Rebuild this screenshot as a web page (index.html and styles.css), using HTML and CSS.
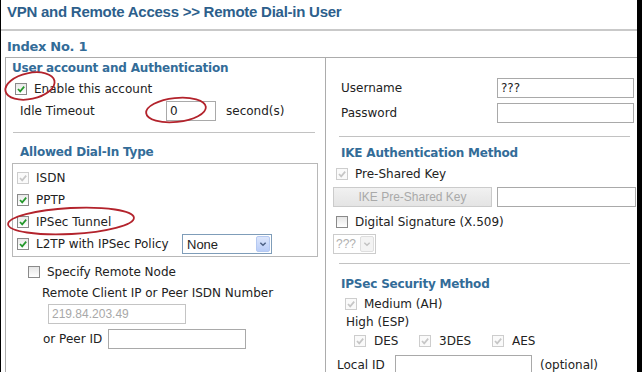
FILE: index.html
```html
<!DOCTYPE html>
<html lang="en">
<head>
    <meta charset="UTF-8">
    <title>Remote Dial-in User</title>
    <link rel="stylesheet" href="styles.css">
</head>
<body>
<div class="page">
    <h1 class="title">VPN and Remote Access &gt;&gt; Remote Dial-in User</h1>
    <div class="index">Index No. 1</div>

    <div class="panels">
        <!-- left side -->
        <div class="panel left">
            <div class="sec-title first">User account and Authentication</div>
            <div class="row enable">
                <span class="cb"><svg viewBox="0 0 10 10"><polyline points="2,5 4.2,7.4 8.2,2.6"/></svg></span>
                Enable this account
            </div>
            <div class="row idle">
                <span class="idle-label">Idle Timeout</span>
                <input type="text" class="field timeout" value="0">
                <span class="unit">second(s)</span>
            </div>
            <div class="sep"></div>
            <div class="sec-title dial">Allowed Dial-In Type</div>
            <div class="dial-box">
                <div class="row"><span class="cb off"><svg viewBox="0 0 10 10"><polyline points="2,5 4.2,7.4 8.2,2.6"/></svg></span>ISDN</div>
                <div class="row"><span class="cb"><svg viewBox="0 0 10 10"><polyline points="2,5 4.2,7.4 8.2,2.6"/></svg></span>PPTP</div>
                <div class="row"><span class="cb"><svg viewBox="0 0 10 10"><polyline points="2,5 4.2,7.4 8.2,2.6"/></svg></span>IPSec Tunnel</div>
                <div class="row">
                    <span class="cb"><svg viewBox="0 0 10 10"><polyline points="2,5 4.2,7.4 8.2,2.6"/></svg></span>
                    <span class="l2tp-label">L2TP with IPSec Policy</span>
                    <span class="select policy">
                        <span class="select-text">None</span>
                        <span class="arrow"><svg viewBox="0 0 9 6"><polyline points="1.5,1.5 4.5,4.5 7.5,1.5"/></svg></span>
                    </span>
                </div>
            </div>
            <div class="row specify"><span class="cb blank"></span>Specify Remote Node</div>
            <div class="row remote-label">Remote Client IP or Peer ISDN Number</div>
            <div class="row remote-ip"><input type="text" class="field wide disabled" value="219.84.203.49"></div>
            <div class="row peer">
                <span class="peer-label">or Peer ID</span>
                <input type="text" class="field wide" value="">
            </div>
        </div>

        <!-- right side -->
        <div class="panel right">
            <div class="row user">
                <span class="pair-label">Username</span>
                <input type="text" class="field cred" value="???">
            </div>
            <div class="row pass">
                <span class="pair-label">Password</span>
                <input type="text" class="field cred" value="">
            </div>
            <div class="sep right-sep"></div>
            <div class="sec-title ike">IKE Authentication Method</div>
            <div class="row chk-row"><span class="cb off"><svg viewBox="0 0 10 10"><polyline points="2,5 4.2,7.4 8.2,2.6"/></svg></span>Pre-Shared Key</div>
            <div class="row key-row">
                <span class="key-btn">IKE Pre-Shared Key</span>
                <input type="text" class="field key" value="">
            </div>
            <div class="row chk-row digital"><span class="cb blank"></span>Digital Signature (X.509)</div>
            <div class="row cert-row">
                <span class="select cert">
                    <span class="select-text">???</span>
                    <span class="arrow"><svg viewBox="0 0 9 6"><polyline points="1.5,1.5 4.5,4.5 7.5,1.5"/></svg></span>
                </span>
            </div>
            <div class="sep right-sep second"></div>
            <div class="sec-title ipsec">IPSec Security Method</div>
            <div class="row medium"><span class="cb off"><svg viewBox="0 0 10 10"><polyline points="2,5 4.2,7.4 8.2,2.6"/></svg></span>Medium (AH)</div>
            <div class="row high">High (ESP)</div>
            <div class="row algos">
                <span class="algo des"><span class="cb off"><svg viewBox="0 0 10 10"><polyline points="2,5 4.2,7.4 8.2,2.6"/></svg></span>DES</span>
                <span class="algo tdes"><span class="cb off"><svg viewBox="0 0 10 10"><polyline points="2,5 4.2,7.4 8.2,2.6"/></svg></span>3DES</span>
                <span class="algo"><span class="cb off"><svg viewBox="0 0 10 10"><polyline points="2,5 4.2,7.4 8.2,2.6"/></svg></span>AES</span>
            </div>
            <div class="row local">
                <span class="local-label">Local ID</span>
                <input type="text" class="field cred" value="">
                <span class="unit">(optional)</span>
            </div>
        </div>
    </div>
</div>

<!-- red marks drawn over the screenshot -->
<svg class="marks" viewBox="0 0 642 372">
    <ellipse cx="30" cy="86" rx="25" ry="13" transform="rotate(-12 30 86)"/>
    <ellipse cx="176" cy="110" rx="30" ry="12" transform="rotate(-6 176 110)"/>
    <ellipse cx="71" cy="221" rx="63" ry="13" transform="rotate(-3 71 221)"/>
</svg>
</body>
</html>
```

FILE: styles.css
```css
body {
    margin: 0;
    background-color: #000;
    font-family: 'DejaVu Sans', Verdana, sans-serif;
    font-size: 12px;
    color: #222;
    position: relative;
    width: 642px;
    height: 372px;
    overflow: hidden;
}

.page {
    margin: 0 5px 0 1px;
    background-color: #fff;
    height: 372px;
    overflow: hidden;
}

.title {
    margin: 0;
    padding: 2px 0 7px 6px;
    font-family: 'Liberation Sans', Arial, sans-serif;
    font-size: 15px;
    letter-spacing: -0.25px;
    line-height: 20px;
    color: #2d5f8c;
    border-bottom: 2px solid #c9c9c9;
}

.index {
    padding: 6px 0 0 6px;
    height: 20px;
    line-height: 20px;
    font-weight: bold;
    font-size: 13px;
    letter-spacing: -0.3px;
    color: #336c98;
}

.panels {
    display: grid;
    grid-template-columns: 321px 1fr;
    margin-left: 4px;
    border-top: 1px solid #acacac;
}

.panel.left {
    border-left: 1px solid #acacac;
    border-right: 1px solid #acacac;
    height: 320px;
}

.sec-title {
    font-weight: bold;
    letter-spacing: -0.2px;
    color: #336c98;
    line-height: 20px;
}

.sec-title.first {
    padding-left: 6px;
}

.sec-title.dial {
    padding: 9px 0 1px 14px;
}

.row {
    display: flex;
    align-items: center;
    height: 22px;
    white-space: nowrap;
}

.cb {
    display: inline-flex;
    align-items: center;
    justify-content: center;
    width: 12px;
    height: 12px;
    box-sizing: border-box;
    border: 1px solid #8a8a8a;
    background: linear-gradient(#e9e9e9, #fff);
    margin-right: 7px;
    flex: none;
}

.cb svg {
    width: 10px;
    height: 10px;
}

.cb polyline {
    fill: none;
    stroke: #23972a;
    stroke-width: 1.7;
}

.cb.off {
    border-color: #cdcdcd;
    background: #fafafa;
}

.cb.off polyline {
    stroke: #c6c6c6;
}

.field {
    height: 20px;
    box-sizing: border-box;
    border: 1px solid #a9a9a9;
    padding: 0 3px;
    margin: 0;
    font-family: 'DejaVu Sans', Verdana, sans-serif;
    font-size: 12px;
    color: #222;
    background: #fff;
    outline: none;
}

.field.disabled {
    font-family: 'Liberation Sans', Arial, sans-serif;
    color: #a8a8a8;
    border-color: #c4c4c4;
}

/* left panel rows */
.enable {
    margin-left: 9px;
}

.idle {
    margin-left: 14px;
}

.idle-label {
    width: 146px;
}

.timeout {
    width: 50px;
}

.unit {
    margin-left: 10px;
}

.sep {
    margin: 10px 10px 0 7px;
    border-top: 1px solid #c2c2c2;
}

.dial-box {
    margin: 0 7px 0 6px;
    border: 1px solid #b8b8b8;
    padding: 3px 0 1px 4px;
}

.l2tp-label {
    width: 146px;
}

.select {
    display: inline-flex;
    align-items: center;
    box-sizing: border-box;
    height: 20px;
    border: 1px solid #7f9db9;
    background: #fff;
    font-family: 'Liberation Sans', Arial, sans-serif;
    font-size: 13px;
    padding: 1px;
}

.select-text {
    flex: 1;
    padding-left: 3px;
}

.arrow {
    display: inline-flex;
    align-items: center;
    justify-content: center;
    width: 14px;
    height: 16px;
    box-sizing: border-box;
    border: 1px solid #b5c9f1;
    border-radius: 2px;
    background: linear-gradient(#dce6fb, #b9cdf8);
}

.arrow svg {
    width: 8px;
    height: 6px;
}

.arrow polyline {
    fill: none;
    stroke: #4d6185;
    stroke-width: 1.6;
}

.select.policy {
    width: 90px;
}

.specify {
    margin: 4px 0 0 22px;
}

.cb.blank {
    border-color: #8a8a8a;
    background: linear-gradient(#e6e6e6, #fff);
}

.remote-label {
    height: 20px;
    margin-left: 36px;
}

.remote-ip {
    margin: 0 0 0 42px;
}

.field.wide {
    width: 138px;
}

.peer {
    margin: 3px 0 0 37px;
}

.peer-label {
    width: 65px;
}

/* right panel rows */
.panel.right {
    padding-left: 7px;
}

.user {
    margin-top: 19px;
}

.pass {
    margin-top: 3px;
}

.pair-label {
    width: 156px;
    margin-left: 8px;
}

.field.cred {
    width: 137px;
}

.sep.right-sep {
    margin: 12px 7px 0 6px;
}

.sep.right-sep.second {
    margin-top: 8px;
}

.sec-title.ike {
    padding: 6px 0 0 8px;
}

.chk-row {
    margin-left: 3px;
}

.key-row {
    margin-top: 1px;
}

.key-btn {
    display: inline-flex;
    align-items: center;
    justify-content: center;
    width: 159px;
    height: 20px;
    box-sizing: border-box;
    border: 1px solid #cbcbcb;
    background: linear-gradient(#f1f1f1, #e4e4e4);
    font-family: 'Liberation Sans', Arial, sans-serif;
    font-size: 12px;
    color: #a9a9a9;
}

.field.key {
    width: 139px;
    margin-left: 5px;
}

.digital {
    margin-top: 3px;
}

.select.cert {
    width: 43px;
    height: 20px;
    border-color: #cccccc;
    color: #b0b0b0;
    font-size: 12px;
}

.select.cert .select-text {
    padding-left: 1px;
}

.select.cert .arrow {
    border-color: #dedede;
    background: #f3f3f3;
}

.select.cert .arrow polyline {
    stroke: #c2c2c2;
}

.sec-title.ipsec {
    padding: 10px 0 0 8px;
}

.medium {
    height: 19px;
    margin-left: 12px;
}

.high {
    height: 18px;
    margin-left: 13px;
}

.algos {
    height: 20px;
    margin-left: 21px;
}

.algo {
    display: inline-flex;
    align-items: center;
}

.algo .cb {
    margin-right: 8px;
}

.algo.des {
    width: 65px;
}

.algo.tdes {
    width: 73px;
}

.local {
    margin: 3px 0 0 4px;
}

.local-label {
    width: 58px;
}

.local .unit {
    margin-left: 8px;
}

.marks {
    position: absolute;
    left: 0;
    top: 0;
    width: 642px;
    height: 372px;
    pointer-events: none;
}

.marks ellipse {
    fill: none;
    stroke: #b3232c;
    stroke-width: 1.8;
}
```
